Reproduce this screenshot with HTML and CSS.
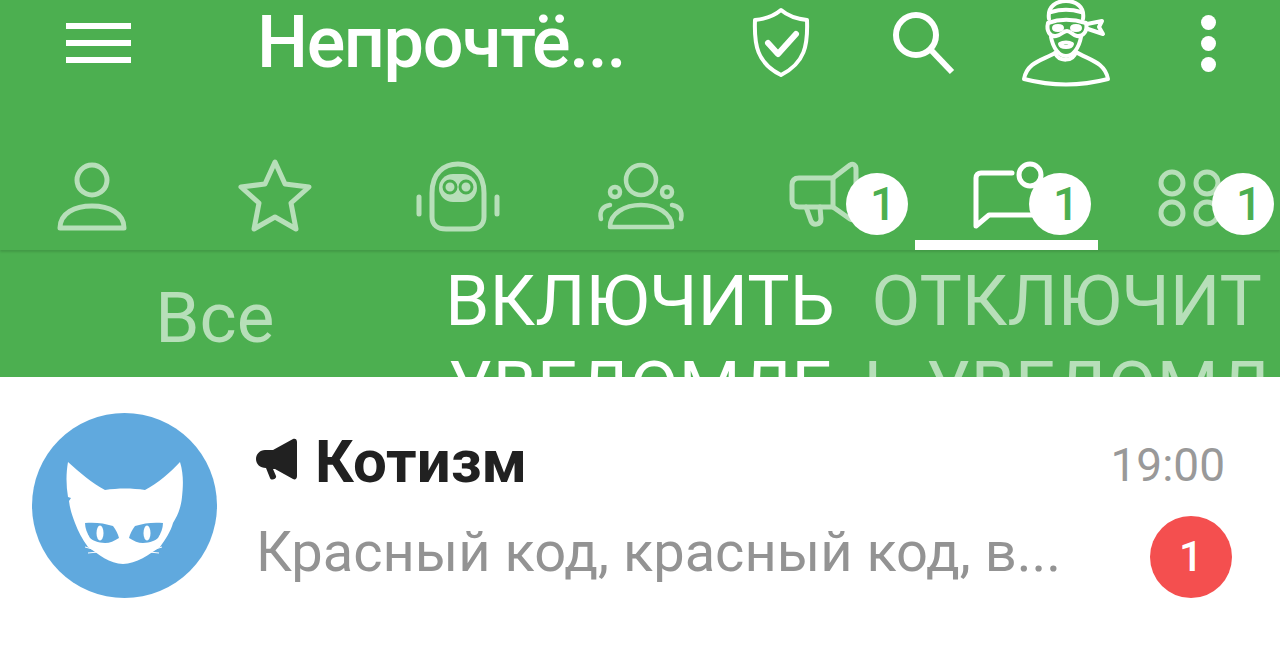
FILE: index.html
```html
<html>

<head>
    <meta charset="utf-8">
    <link rel="stylesheet" href="styles.css">
</head>

<body>

<div class="app-bar">

    <div class="toolbar">
        <div class="menu-btn">
            <span class="menu-line"></span>
            <span class="menu-line"></span>
            <span class="menu-line"></span>
        </div>
        <div class="title">Непрочтё...</div>

        <div class="action">
            <svg class="icon-line thin" width="60" height="72" viewBox="0 0 60 72">
                <path d="M30 3 C37 9 46 12 56 13 C57 38 54 56 30 68 C6 56 3 38 4 13 C14 12 23 9 30 3 Z"/>
                <path class="thick" d="M17 36 L27 47 L45 27"/>
            </svg>
        </div>
        <div class="action">
            <svg class="icon-line thick" width="66" height="66" viewBox="0 0 66 66">
                <circle cx="25" cy="25" r="20"/>
                <path class="butt" d="M39 39 L61 62"/>
            </svg>
        </div>
        <div class="action">
            <svg class="icon-line thin" width="90" height="90" viewBox="0 0 90 90">
                <path d="M28 21 C26 8 36 3 45 3 C54 3 64 8 62 21"/>
                <path d="M30 14 C40 11 50 11 60 14"/>
                <path d="M27 25 C38 21 52 21 65 25 C67 33 62 39 56 38 C51 37 50 33 46 33 C42 33 41 37 35 38 C29 39 25 33 27 25 Z"/>
                <ellipse cx="37" cy="30" rx="4" ry="2"/>
                <ellipse cx="55" cy="30" rx="4" ry="2"/>
                <path d="M66 26 L81 23 L78 29 L82 36 L67 31"/>
                <path d="M30 39 C32 50 38 58 45 58 C52 58 58 50 60 39"/>
                <path d="M39 46 C42 44 48 44 51 46 C50 50 40 50 39 46 Z"/>
                <path d="M34 55 C22 62 6 64 3 81 C30 88 60 88 87 81 C84 64 68 62 55 54"/>
                <path d="M34 55 C38 64 52 64 55 54"/>
            </svg>
        </div>
        <div class="action">
            <div class="dots">
                <span class="dot"></span>
                <span class="dot"></span>
                <span class="dot"></span>
            </div>
        </div>
    </div>

    <div class="tabs">
        <div class="tab">
            <svg class="icon-line dim" width="80" height="80" viewBox="0 0 80 80">
                <ellipse cx="40" cy="23" rx="15" ry="15"/>
                <path d="M8 71 C8 56 23 49 40 49 C57 49 72 56 72 71 Z"/>
            </svg>
        </div>
        <div class="tab">
            <svg class="icon-line dim" width="80" height="80" viewBox="0 0 80 80">
                <path d="M40 5 L50 27 L74 30 L56 46 L61 72 L40 60 L19 72 L24 46 L6 30 L30 27 Z"/>
            </svg>
        </div>
        <div class="tab">
            <svg class="icon-line dim" width="80" height="80" viewBox="0 0 80 80">
                <path d="M14 36 C14 16 26 7 40 7 C54 7 66 16 66 36 V60 C66 68 60 72 52 72 H28 C20 72 14 68 14 60 Z"/>
                <rect class="solid" x="21" y="17" width="38" height="28" rx="14"/>
                <circle class="hole" cx="32" cy="30" r="6"/>
                <circle class="hole" cx="48" cy="30" r="6"/>
                <path d="M1 40 V57"/>
                <path d="M79 40 V57"/>
            </svg>
        </div>
        <div class="tab">
            <svg class="icon-line dim small-stroke" width="80" height="80" viewBox="0 0 80 80">
                <ellipse cx="40" cy="23" rx="15" ry="15"/>
                <circle cx="14" cy="35" r="5"/>
                <circle cx="66" cy="35" r="5"/>
                <path d="M9 70 C9 56 24 48 40 48 C56 48 71 56 71 70 Z"/>
                <path d="M9 48 C2 49 -2 54 0 62"/>
                <path d="M71 48 C78 49 82 54 80 62"/>
            </svg>
        </div>
        <div class="tab">
            <svg class="icon-line dim" width="80" height="80" viewBox="0 0 80 80">
                <path d="M15 21 H49 V50 H15 C10 50 8 47 8 43 V28 C8 24 10 21 15 21 Z"/>
                <path d="M49 21 L66 8 C69 6 72 8 72 12 V58 C72 62 69 64 66 62 L49 50"/>
                <path d="M22 50 L27 64 C29 69 37 68 37 62 L36 50"/>
            </svg>
            <span class="badge">1</span>
        </div>
        <div class="tab active">
            <svg class="icon-line" width="80" height="80" viewBox="0 0 80 80">
                <path d="M45 16 H14 C11 16 9 18 9 21 V69 L22 58 H70 V30"/>
                <circle cx="63" cy="18" r="11"/>
            </svg>
            <span class="badge">1</span>
        </div>
        <div class="tab">
            <svg class="icon-line dim" width="80" height="80" viewBox="0 0 80 80">
                <circle cx="22" cy="26" r="11"/>
                <circle cx="57" cy="26" r="11"/>
                <circle cx="22" cy="56" r="11"/>
                <circle cx="57" cy="56" r="11"/>
            </svg>
            <span class="badge">1</span>
        </div>
    </div>

    <div class="filters">
        <div class="filter all">Все</div>
        <div class="filter on">ВКЛЮЧИТЬ УВЕДОМЛЕНИЯ</div>
        <div class="filter off">ОТКЛЮЧИТЬ УВЕДОМЛЕНИЯ</div>
    </div>

</div>

<div class="chat-row">
    <svg class="avatar" width="185" height="185" viewBox="0 0 185 185">
        <circle cx="92.5" cy="92.5" r="92.5" fill="#60a9de"/>
        <path fill="#fff" d="M36 49 C48 60 60 70 73 77 C86 75 100 75 113 77 C126 70 138 60 148 49 C152 62 151 74 150 84 C149 94 146 102 141 110 C139 118 133 127 128 134 C118 141 104 151 91 151 C78 151 66 141 56 134 C50 126 46 118 43 110 C40 102 38 96 37 88 L39 85 L36 84 C34 72 34 60 36 49 Z"/>
        <path fill="#60a9de" d="M53 110 C62 109 72 110 81 113 C84 117 86 121 87 125 C82 128 78 130 73 130 C66 130 60 127 58 125 C55 120 53 115 53 110 Z"/>
        <path fill="#60a9de" d="M131 110 C122 109 112 110 103 113 C100 117 98 121 97 125 C102 128 106 130 111 130 C118 130 124 127 126 125 C129 120 131 115 131 110 Z"/>
        <ellipse cx="68" cy="120" rx="3.5" ry="7.5" fill="#fff"/>
        <ellipse cx="115" cy="120" rx="3.5" ry="7.5" fill="#fff"/>
        <path stroke="#fff" fill="none" d="M53 134 L64 137 M56 140 L66 139 M130 134 L120 137 M127 140 L117 139"/>
    </svg>

    <div class="chat-body">
        <div class="chat-top">
            <svg class="channel-icon" width="42" height="42" viewBox="0 0 42 42">
                <path fill="#212121" d="M37 1 C39 0 41 1 41 4 V38 C41 41 39 42 37 41 L19 31 L17 31 L20 38 C21 41 15 43 14 40 L10 30 C4 30 0 26 0 21 C0 16 4 12 9 12 H17 Z"/>
            </svg>
            <span class="chat-name">Котизм</span>
            <span class="chat-time">19:00</span>
        </div>
        <div class="chat-bottom">
            <span class="chat-text">Красный код, красный код, в...</span>
            <span class="unread">1</span>
        </div>
    </div>
</div>

</body>

</html>
```

FILE: styles.css
```css
body {
    margin: 0;
    background: #fff;
    font-family: Roboto, sans-serif;
    overflow: hidden;
}

.app-bar {
    background: #4caf50;
    color: #fff;
}

.toolbar {
    display: flex;
    align-items: center;
    height: 86px;
    padding-bottom: 69px;
}

.menu-btn {
    width: 196px;
    display: flex;
    flex-direction: column;
    align-items: center;
    gap: 11px;
}

.menu-line {
    width: 65px;
    height: 6px;
    background: #fff;
}

.title {
    flex: 1;
    margin-left: 61px;
    margin-bottom: 2px;
    font-size: 72px;
    font-weight: 500;
    letter-spacing: -1.4px;
    white-space: nowrap;
}

.action {
    width: 142.5px;
    display: flex;
    justify-content: center;
}

.dots {
    display: flex;
    flex-direction: column;
    gap: 6px;
}

.dot {
    width: 15px;
    height: 15px;
    border-radius: 50%;
    background: #fff;
}

.icon-line {
    fill: none;
    stroke: #fff;
    stroke-width: 5;
    stroke-linejoin: round;
    stroke-linecap: round;
    overflow: visible;
}

.icon-line.thin {
    stroke-width: 4;
}

.icon-line.thick,
.icon-line .thick {
    stroke-width: 6;
}

.icon-line.dim {
    stroke: #b7dfb9;
}

.icon-line.small-stroke {
    stroke-width: 4.5;
}

.icon-line .butt {
    stroke-linecap: butt;
}

.icon-line .solid {
    fill: #b7dfb9;
    stroke: none;
}

.icon-line .hole {
    fill: #b7dfb9;
    stroke: #4caf50;
    stroke-width: 3;
}

.tabs {
    display: grid;
    grid-template-columns: repeat(7, 183px);
    height: 95px;
    box-shadow: 0 2px 2px rgba(0, 0, 0, 0.12);
    position: relative;
}

.tab {
    position: relative;
    display: flex;
    justify-content: center;
    padding-top: 2px;
}

.tab.active {
    border-bottom: 10px solid #fff;
    height: 83px;
}

.badge {
    position: absolute;
    left: 114px;
    top: 18px;
    width: 62px;
    height: 62px;
    line-height: 62px;
    border-radius: 50%;
    background: #fff;
    color: #4caf50;
    text-align: center;
    text-indent: 12px;
    font-size: 46px;
    font-weight: 500;
}

.filters {
    display: grid;
    grid-template-columns: repeat(3, 1fr);
    height: 127px;
    overflow: hidden;
    font-size: 71px;
    line-height: 86px;
}

.filter {
    padding: 8px 8px 0;
    text-align: center;
    word-break: break-all;
}

.filter.all {
    padding: 25px 8px 0 11px;
    color: #b7dfb9;
}

.filter.off {
    color: #b7dfb9;
}

.chat-row {
    display: flex;
    padding: 36px 48px 0 32px;
}

.avatar {
    flex: none;
}

.chat-body {
    flex: 1;
    margin-left: 39px;
}

.chat-top {
    display: flex;
    align-items: center;
    height: 103px;
}

.channel-icon {
    flex: none;
    margin-bottom: 12px;
}

.chat-name {
    flex: 1;
    margin-left: 17px;
    margin-bottom: 7px;
    font-size: 60px;
    font-weight: 700;
    color: #212121;
}

.chat-time {
    margin-right: 7px;
    margin-top: 1px;
    font-size: 46px;
    color: #999;
}

.chat-bottom {
    display: flex;
    align-items: center;
    justify-content: space-between;
}

.chat-text {
    padding-bottom: 10px;
    font-size: 56px;
    color: #939393;
    white-space: nowrap;
}

.unread {
    width: 82px;
    height: 82px;
    line-height: 82px;
    border-radius: 50%;
    background: #f44f4f;
    color: #fff;
    text-align: center;
    font-size: 42px;
    font-weight: 500;
}
```
